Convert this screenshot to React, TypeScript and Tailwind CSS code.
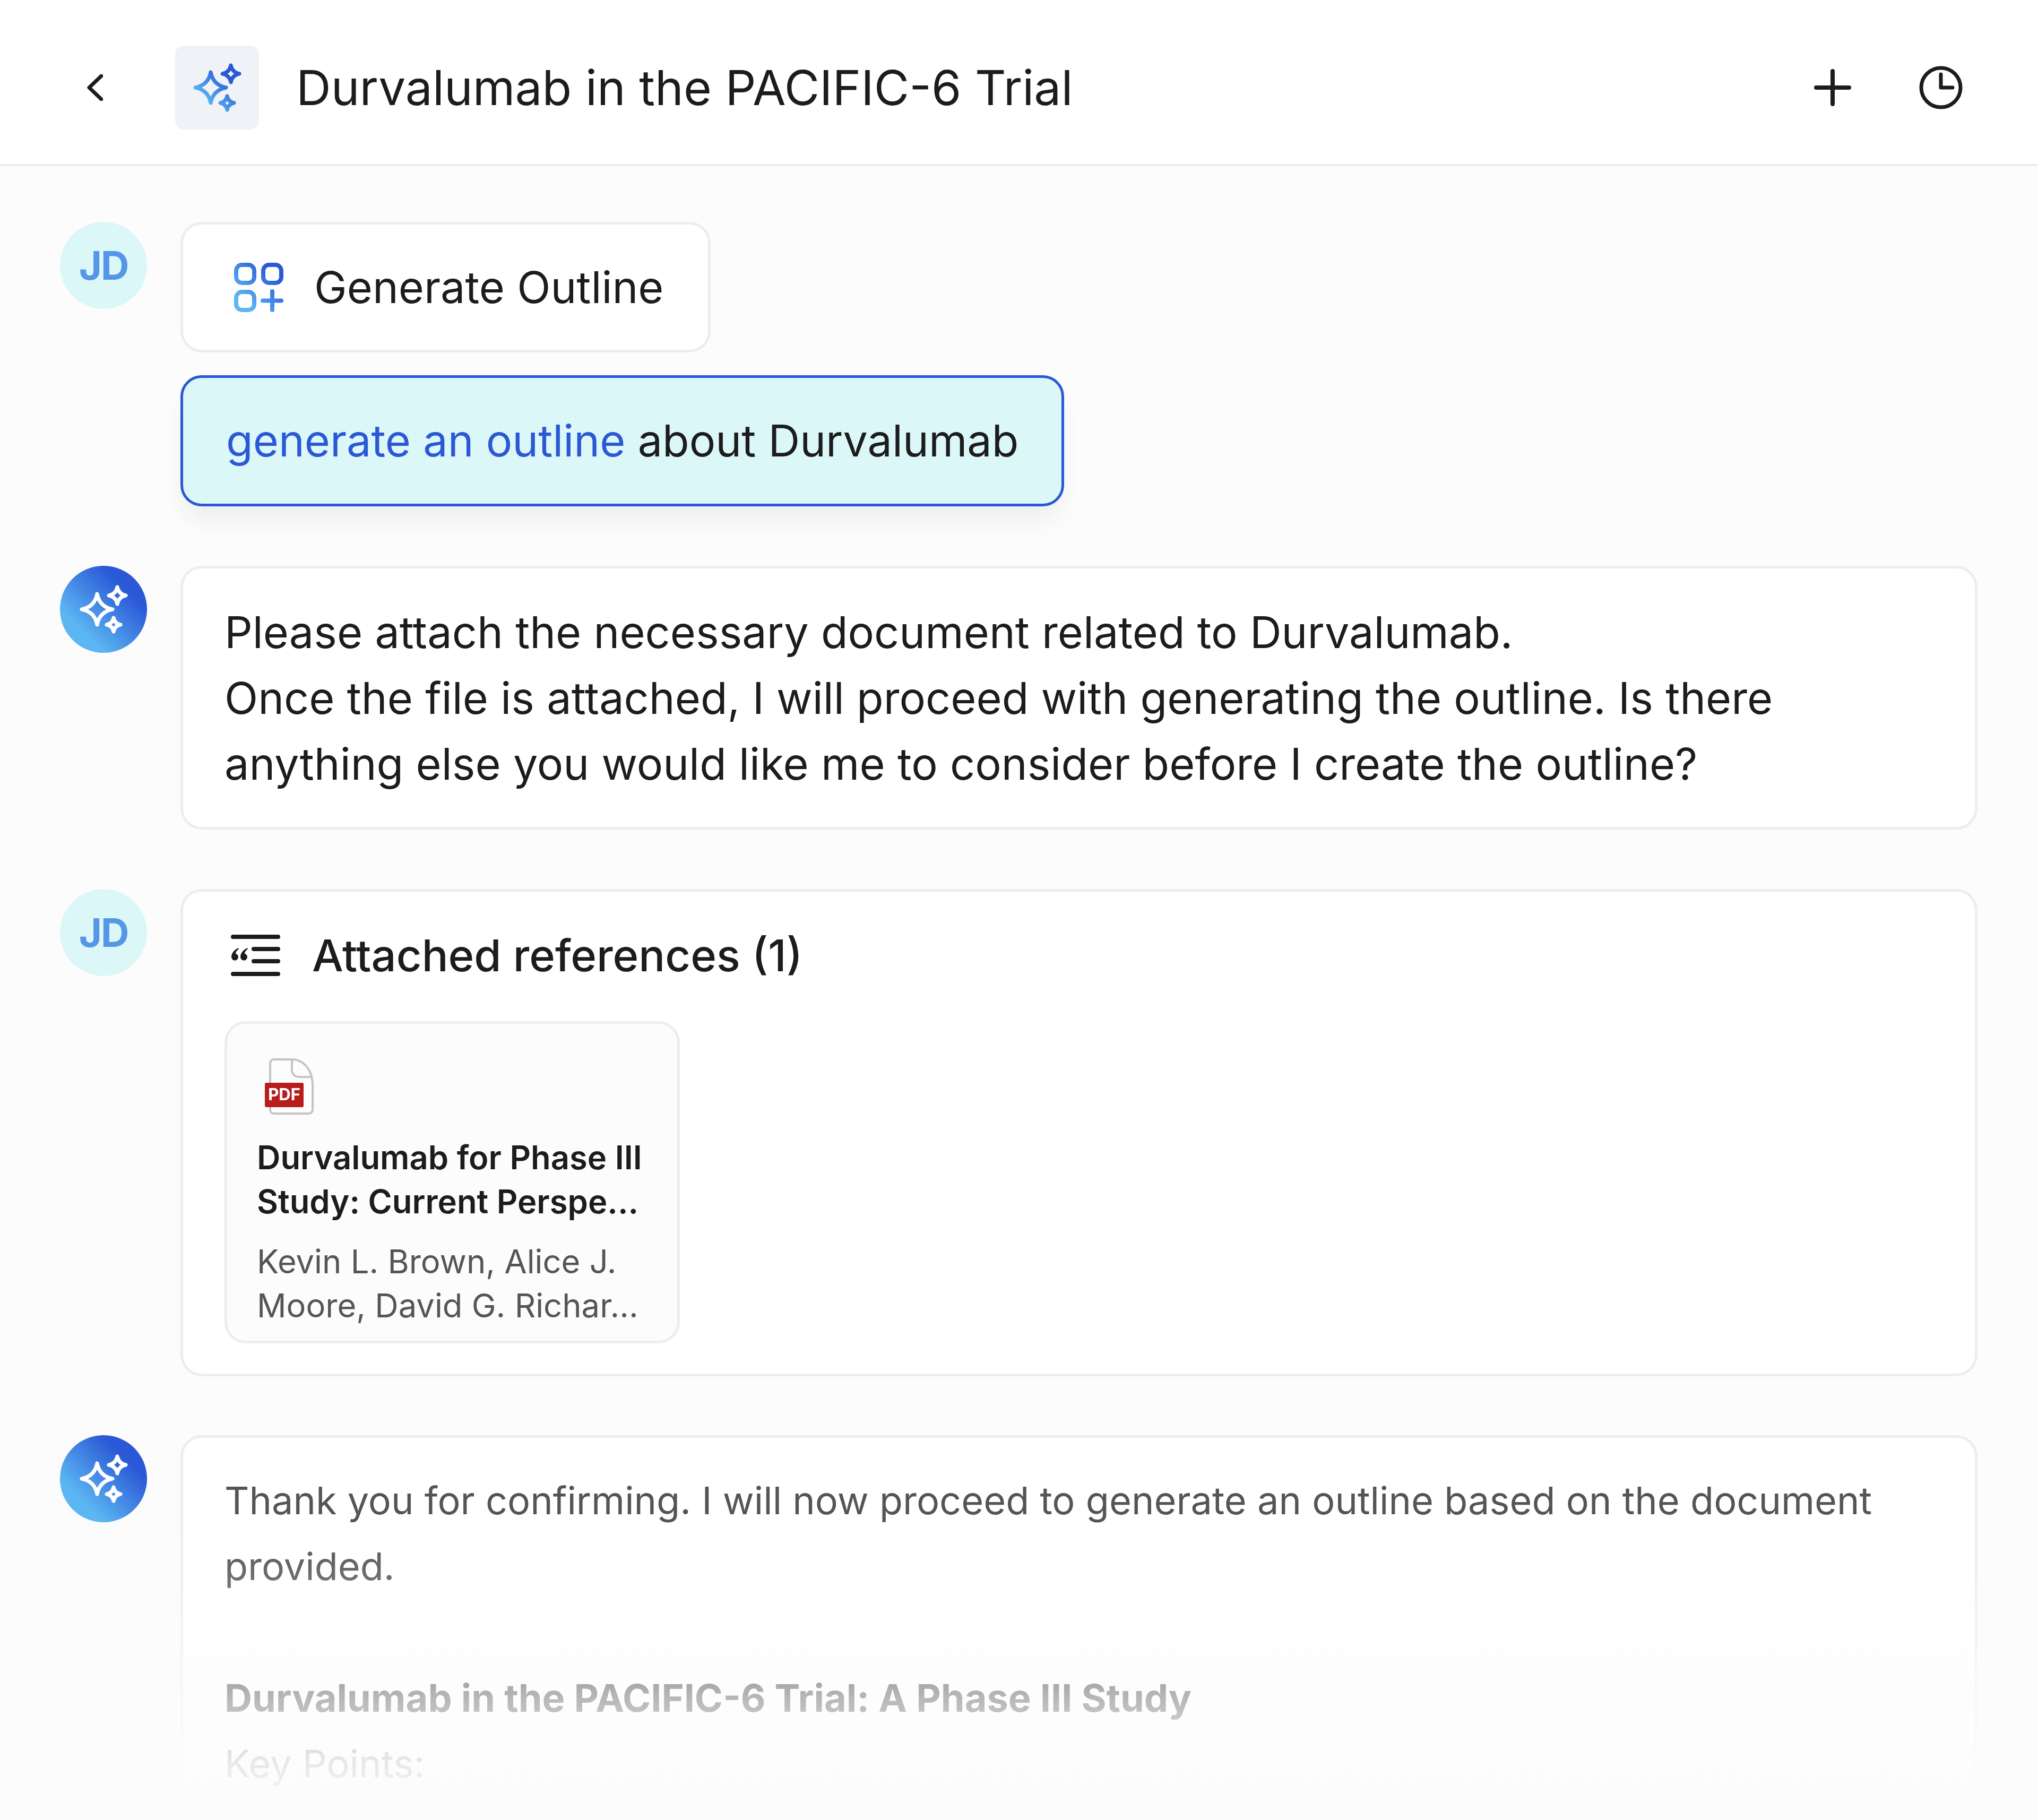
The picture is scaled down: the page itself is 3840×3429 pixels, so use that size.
import React from 'react';

const FONT = "font-['Inter','Liberation_Sans',sans-serif]";

// four pointed star outline, concave sides
const star = (cx: number, cy: number, r: number) => {
  const q = r * 0.16;
  return `M${cx} ${cy - r}Q${cx + q} ${cy - q} ${cx + r} ${cy}Q${cx + q} ${cy + q} ${cx} ${cy + r}Q${cx - q} ${cy + q} ${cx - r} ${cy}Q${cx - q} ${cy - q} ${cx} ${cy - r}Z`;
};

const Sparkles: React.FC<{ id: string; stroke: string; className?: string }> = ({ id, stroke, className }) => (
  <svg viewBox="0 0 100 100" className={className} fill="none">
    <defs>
      <linearGradient id={id} x1="15" y1="85" x2="85" y2="15" gradientUnits="userSpaceOnUse">
        <stop offset="0.15" stopColor="#5bb6f2" />
        <stop offset="0.8" stopColor="#2a58d6" />
      </linearGradient>
    </defs>
    <g stroke={stroke === 'gradient' ? `url(#${id})` : stroke} strokeWidth="7" strokeLinejoin="round">
      <path d={star(38, 50, 29)} />
      <path d={star(76, 24, 16)} />
      <path d={star(69, 79, 13)} />
    </g>
  </svg>
);

const Avatar: React.FC<{ ai?: boolean }> = ({ ai }) =>
  ai ? (
    <div className="flex h-[164px] w-[164px] shrink-0 items-center justify-center rounded-full bg-[linear-gradient(45deg,#5bb6f2_25%,#2a58d6_75%)]">
      <Sparkles id="ai" stroke="#ffffff" className="h-[100px] w-[100px]" />
    </div>
  ) : (
    <div className="flex h-[164px] w-[164px] shrink-0 items-center justify-center rounded-full bg-[#dcf7f8] text-[74px] font-bold tracking-[-2px] text-[#5596e6]">
      JD
    </div>
  );

const GenerateIcon = () => (
  <svg viewBox="0 0 93 93" className="h-[93px] w-[93px] shrink-0" fill="none" strokeWidth="8">
    <defs>
      <linearGradient id="gen" x1="0" y1="93" x2="93" y2="0" gradientUnits="userSpaceOnUse">
        <stop offset="0.2" stopColor="#5bb6f2" />
        <stop offset="0.8" stopColor="#2a58d6" />
      </linearGradient>
    </defs>
    <g stroke="url(#gen)" strokeLinecap="round">
      <rect x="4" y="4" width="34" height="34" rx="11" />
      <rect x="55" y="4" width="34" height="34" rx="11" />
      <rect x="4" y="55" width="34" height="34" rx="11" />
      <path d="M72 54V89M54 71.500H89" />
    </g>
  </svg>
);

const RefsIcon = () => (
  <svg viewBox="0 0 93 78" className="h-[78px] w-[93px] shrink-0" fill="none">
    <g stroke="#1c1c1c" strokeWidth="8" strokeLinecap="round">
      <path d="M4 4H89M43 27H89M43 50H89M4 74H89" />
    </g>
    <g fill="#1c1c1c">
      <path d="M14 25C6 29 1 35 1 42a6.500 6.500 0 1 0 8-6.300c0-3 2-6 6-9z" />
      <path d="M31 25C23 29 18 35 18 42a6.500 6.500 0 1 0 8-6.300c0-3 2-6 6-9z" />
    </g>
  </svg>
);

const PdfIcon = () => (
  <svg viewBox="0 0 92 106" className="h-[106px] w-[92px]" fill="none">
    <path
      d="M17 2H51C75 2 90 25 90 50V97a7 7 0 0 1-7 7H17a7 7 0 0 1-7-7V9a7 7 0 0 1 7-7Z"
      stroke="#c4c4c4"
      strokeWidth="4"
      fill="#fdfdfd"
    />
    <path d="M51 3V22a13 13 0 0 0 13 13H89" stroke="#c4c4c4" strokeWidth="4" />
    <rect x="0" y="46" width="73" height="46" rx="3" fill="#b91c1c" />
    <text x="36.500" y="79" textAnchor="middle" fontSize="31" fontWeight="700" fontFamily="Inter, sans-serif" fill="#ffffff">
      PDF
    </text>
  </svg>
);

const cardClass = 'min-w-0 flex-1 rounded-[40px] border-[5px] border-[#eceeee] bg-white';

export default function App() {
  return (
    <div className={`relative h-[3429px] w-[3840px] overflow-hidden bg-[#fcfcfc] text-[#1c1c1c] ${FONT}`}>
      <header className="flex h-[313px] items-center border-b-[4px] border-[#eceeee] bg-white pt-[21px] pr-[142px] pl-[164px]">
        <svg viewBox="0 0 30 50" className="h-[50px] w-[30px] shrink-0" fill="none">
          <path d="M27 3 4 25l23 22" stroke="#1c1c1c" strokeWidth="7" strokeLinecap="round" strokeLinejoin="round" />
        </svg>
        <div className="ml-[136px] flex h-[158px] w-[158px] shrink-0 items-center justify-center rounded-[16px] bg-[#eff3f7]">
          <Sparkles id="head" stroke="gradient" className="h-[100px] w-[100px]" />
        </div>
        <h1 className="ml-[70px] text-[91px] font-normal">Durvalumab in the PACIFIC-6 Trial</h1>
        <div className="ml-auto flex items-center gap-[128px]">
          <svg viewBox="0 0 70 70" className="h-[70px] w-[70px]" fill="none">
            <path d="M35 4V66M4 35H66" stroke="#1c1c1c" strokeWidth="8" strokeLinecap="round" />
          </svg>
          <svg viewBox="0 0 82 82" className="h-[82px] w-[82px]" fill="none">
            <circle cx="41" cy="41" r="37" stroke="#1c1c1c" strokeWidth="7" />
            <path d="M41 16V41H63" stroke="#1c1c1c" strokeWidth="7" strokeLinecap="round" strokeLinejoin="round" />
          </svg>
        </div>
      </header>

      <main className="flex flex-col pt-[105px] pr-[114px] pl-[113px]">
        <section className="flex gap-[63px]">
          <Avatar />
          <div className="flex flex-col items-start gap-[43px]">
            <div className="flex h-[246px] items-center gap-[58px] rounded-[40px] border-[5px] border-[#eceeee] bg-white pr-[83px] pl-[96px]">
              <GenerateIcon />
              <span className="text-[82.7px]">Generate Outline</span>
            </div>
            <div className="flex h-[247px] items-center rounded-[40px] border-[5px] border-[#2a58d6] bg-[#dcf7f8] pr-[81px] pl-[81px] text-[82.7px] shadow-[0_32px_44px_-8px_rgba(30,40,60,0.07)]">
              <span>
                <span className="text-[#2a58d6]">generate an outline</span> about Durvalumab
              </span>
            </div>
          </div>
        </section>

        <section className="mt-[112px] flex gap-[63px]">
          <Avatar ai />
          <div className={`${cardClass} h-[497px] px-[78px] pt-[58px] text-[82.7px] leading-[124px]`}>
            Please attach the necessary document related to Durvalumab.
            <br />
            Once the file is attached, I will proceed with generating the outline. Is there
            <br />
            anything else you would like me to consider before I create the outline?
          </div>
        </section>

        <section className="mt-[112px] flex gap-[63px]">
          <Avatar />
          <div className={`${cardClass} h-[918px] px-[78px] pt-[58px]`}>
            <div className="flex items-center gap-[60px] pl-[12px]">
              <RefsIcon />
              <span className="text-[83px] font-medium">Attached references (1)</span>
            </div>
            <div className="mt-[61px] h-[607px] w-[858px] rounded-[40px] border-[5px] border-[#eceeee] bg-[#fcfcfc] pt-[65px] pl-[56px]">
              <div className="pl-[15px]">
                <PdfIcon />
              </div>
              <div className="mt-[39px] w-[760px] text-[61.5px] leading-[83px] font-semibold whitespace-nowrap">
                Durvalumab for Phase III
                <br />
                Study: Current Perspe...
              </div>
              <div className="mt-[30px] text-[61.5px] leading-[83px] whitespace-nowrap text-[#555555]">
                Kevin L. Brown, Alice J.
                <br />
                Moore, David G. Richar...
              </div>
            </div>
          </div>
        </section>

        <section className="mt-[111px] flex gap-[63px]">
          <Avatar ai />
          <div className={`${cardClass} h-[1000px] px-[78px] pt-[56px] text-[72px] leading-[124px]`}>
            <p className="text-[#555555]">Thank you for confirming. I will now proceed to generate an outline based on the document provided.</p>
            <p className="mt-[124px] font-bold">Durvalumab in the PACIFIC-6 Trial: A Phase III Study</p>
            <p>Key Points:</p>
          </div>
        </section>
      </main>

      <div className="absolute inset-x-0 bottom-0 h-[549px] bg-[linear-gradient(to_bottom,rgba(252,252,252,0)_0%,rgba(252,252,252,0.1)_13%,rgba(252,252,252,0.69)_58%,rgba(252,252,252,0.9)_79%,rgba(252,252,252,1)_100%)]" />
    </div>
  );
}
